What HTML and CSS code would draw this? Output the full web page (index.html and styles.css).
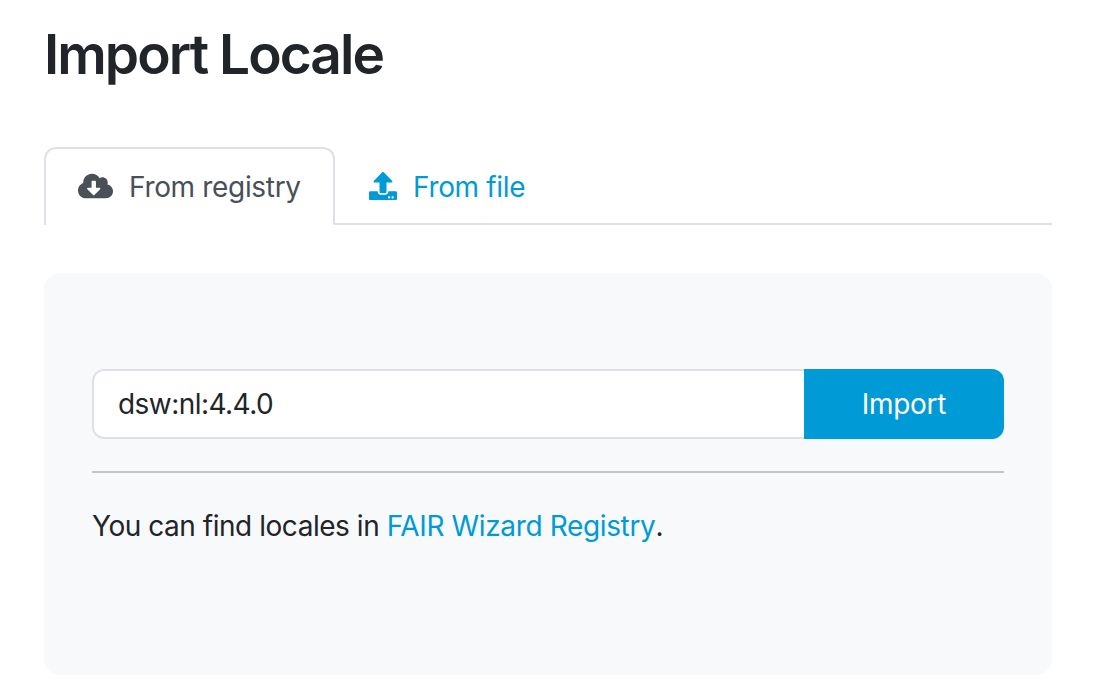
FILE: index.html
```html
<!DOCTYPE html>
<html lang="en">
<head>
<meta charset="utf-8">
<title>Import Locale</title>
<link rel="stylesheet" href="styles.css">
</head>
<body>
<main class="page">
  <h1 class="title">Import Locale</h1>
  <nav class="tabs">
    <a class="tab tab-active">
      <svg class="icon-cloud" viewBox="0 0 640 512" fill="currentColor"><path d="M537.6 226.6c4.1-10.7 6.4-22.4 6.4-34.6 0-53-43-96-96-96-19.7 0-38.1 6-53.3 16.2C367 64.2 315.3 32 256 32c-88.4 0-160 71.6-160 160 0 2.7.1 5.4.2 8.1C40.2 219.8 0 273.2 0 336c0 79.5 64.5 144 144 144h368c70.7 0 128-57.3 128-128 0-61.9-44-113.6-102.4-125.4zm-132.9 88.7L299.3 420.7c-6.2 6.2-16.4 6.2-22.6 0L171.3 315.3c-10.1-10.1-2.9-27.3 11.3-27.3H248V176c0-8.8 7.2-16 16-16h48c8.8 0 16 7.2 16 16v112h65.4c14.2 0 21.4 17.2 11.3 27.3z"/></svg>
      <span class="label">From registry</span>
    </a>
    <a class="tab">
      <svg class="icon-upload" viewBox="0 0 512 512" fill="currentColor"><path d="M296 384h-80c-13.3 0-24-10.7-24-24V192h-87.7c-17.8 0-26.7-21.5-14.1-34.1L242.3 5.7c7.5-7.5 19.8-7.5 27.3 0l152.2 152.2c12.6 12.6 3.7 34.1-14.1 34.1H320v168c0 13.3-10.7 24-24 24zm216-8v112c0 13.3-10.7 24-24 24H24c-13.3 0-24-10.7-24-24V376c0-13.3 10.7-24 24-24h136v8c0 30.9 25.1 56 56 56h80c30.9 0 56-25.1 56-56v-8h136c13.3 0 24 10.7 24 24zm-124 88c0-11-9-20-20-20s-20 9-20 20 9 20 20 20 20-9 20-20zm64 0c0-11-9-20-20-20s-20 9-20 20 9 20 20 20 20-9 20-20z"/></svg>
      <span class="label">From file</span>
    </a>
  </nav>
  <section class="card">
    <div class="input-group">
      <input class="field" type="text" value="dsw:nl:4.4.0">
      <button class="button" type="button">Import</button>
    </div>
    <hr class="divider">
    <p class="hint">You can find locales in <a class="link">FAIR Wizard Registry</a>.</p>
  </section>
</main>
</body>
</html>
```
FILE: styles.css
```css
* { box-sizing: border-box; }
body {
  margin: 0;
  background: #fff;
  color: #212529;
  font-family: Inter, "Liberation Sans", sans-serif;
  font-size: 28px;
  line-height: 42px;
}
.page { padding: 21px 44px 0; }
.title {
  margin: 0 0 59px;
  font-size: 55px;
  line-height: 67px;
  font-weight: 560;
  letter-spacing: -1.95px;
}
.tabs {
  display: flex;
  height: 78px;
  background: linear-gradient(#dee2e6, #dee2e6) bottom / 100% 2px no-repeat;
}
.tab {
  display: flex;
  align-items: center;
  padding: 0 32px 2px;
  border: 2px solid transparent;
  border-bottom: 0;
  color: #009ad6;
  white-space: nowrap;
}
.tab-active {
  width: 291px;
  background: #fff;
  border-color: #dee2e6;
  border-radius: 12px 12px 0 0;
  color: #495057;
}
.label { padding-top: 1px; letter-spacing: -0.33px; }
.icon-cloud { width: 35px; height: 28px; margin-right: 16px; flex: none; }
.icon-upload { width: 28px; height: 28px; margin-right: 16px; flex: none; }
.card {
  height: 402px;
  margin-top: 48px;
  padding: 96px 48px 0;
  border-radius: 16px;
  background: #f8f9fb;
}
.input-group { display: flex; height: 70px; }
.field {
  flex: 1;
  min-width: 0;
  padding: 0 24px;
  border: 2px solid #dee2e6;
  border-right: 0;
  border-radius: 12px 0 0 12px;
  background: #fff;
  color: #212529;
  font: inherit;
  letter-spacing: -0.55px;
  outline: none;
}
.button {
  width: 200px;
  padding: 0;
  border: 0;
  border-radius: 0 12px 12px 0;
  background: #009ad6;
  color: #fff;
  font: inherit;
  letter-spacing: -0.3px;
}
.divider {
  height: 2px;
  margin: 32px 0;
  border: 0;
  background: #c2c4c7;
}
.hint { margin: 0; white-space: nowrap; letter-spacing: -0.46px; }
.link { color: #009ad6; letter-spacing: -0.36px; }
```
